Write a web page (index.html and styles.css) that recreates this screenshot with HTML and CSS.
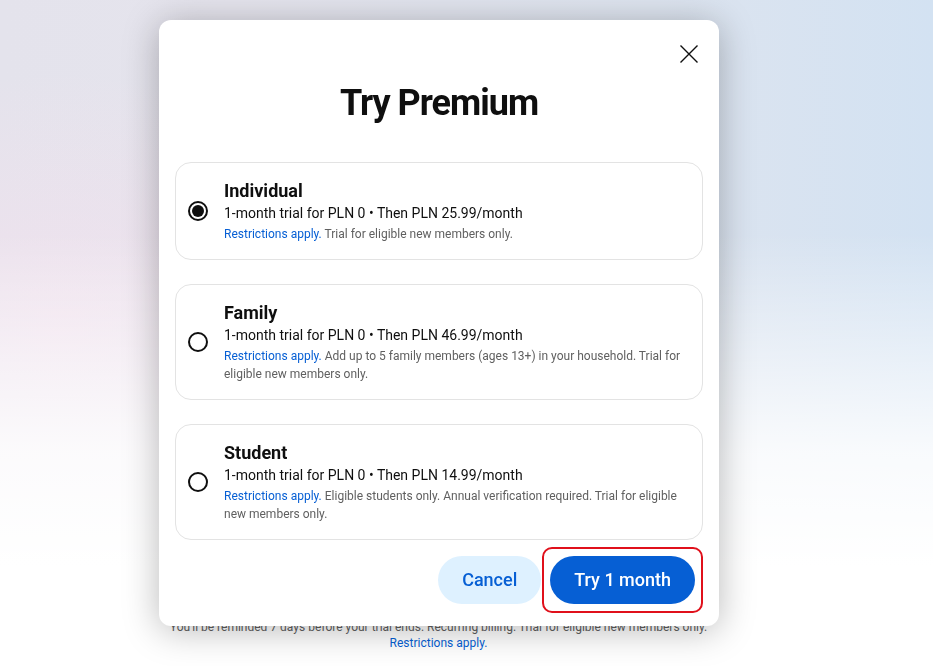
FILE: index.html
```html
<!DOCTYPE html>
<html lang="en">
<head>
<meta charset="utf-8">
<title>Try Premium</title>
<link rel="stylesheet" href="styles.css">
</head>
<body>
<main class="page">
  <p class="page-note">You'll be reminded 7 days before your trial ends. Recurring billing. Trial for eligible new members only.</p>
  <p class="page-note"><a class="link" href="#">Restrictions apply.</a></p>
</main>

<div class="modal" role="dialog" aria-labelledby="dlg-title">
  <div class="modal-top">
    <button class="close" aria-label="Close">
      <svg width="18" height="18" viewBox="0 0 18 18"><path d="M0.5 0.5 L17.5 17.5 M17.5 0.5 L0.5 17.5" stroke="#0f0f0f" stroke-width="1.4" fill="none"/></svg>
    </button>
  </div>
  <h1 class="title" id="dlg-title">Try Premium</h1>

  <div class="plans">
    <label class="plan">
      <span class="radio checked"></span>
      <span class="plan-body">
        <span class="plan-name">Individual</span>
        <span class="plan-price">1-month trial for PLN 0 • Then PLN 25.99/month</span>
        <span class="plan-note"><a class="link" href="#">Restrictions apply.</a> Trial for eligible new members only.</span>
      </span>
    </label>
    <label class="plan">
      <span class="radio"></span>
      <span class="plan-body">
        <span class="plan-name">Family</span>
        <span class="plan-price">1-month trial for PLN 0 • Then PLN 46.99/month</span>
        <span class="plan-note"><a class="link" href="#">Restrictions apply.</a> Add up to 5 family members (ages 13+) in your household. Trial for eligible new members only.</span>
      </span>
    </label>
    <label class="plan">
      <span class="radio"></span>
      <span class="plan-body">
        <span class="plan-name">Student</span>
        <span class="plan-price">1-month trial for PLN 0 • Then PLN 14.99/month</span>
        <span class="plan-note"><a class="link" href="#">Restrictions apply.</a> Eligible students only. Annual verification required. Trial for eligible new members only.</span>
      </span>
    </label>
  </div>

  <div class="actions">
    <button class="btn btn-cancel">Cancel</button>
    <span class="highlight"><button class="btn btn-primary">Try 1 month</button></span>
  </div>
</div>
</body>
</html>
```

FILE: styles.css
```css
* { box-sizing: border-box; }

html, body {
  margin: 0;
  height: 666px;
  overflow: hidden;
}

body {
  font-family: Roboto, "Liberation Sans", Arial, sans-serif;
  color: #0f0f0f;
  background:
    linear-gradient(to bottom, rgba(255,255,255,0) 0%, rgba(255,255,255,0) 35%, rgba(255,255,255,0.85) 68%, #ffffff 85%),
    radial-gradient(ellipse 300px 260px at 60px 330px, rgba(245,225,238,0.7), rgba(245,225,238,0)),
    linear-gradient(to right, #e4e3ec 0%, #e5e4ed 25%, #dde4ef 70%, #d3e2f2 100%);
}

.page {
  width: 877px;
  padding-top: 619px;
}

.page-note {
  margin: 0;
  font-size: 12px;
  line-height: 16px;
  color: #606060;
  text-align: center;
}

.link {
  color: #065fd4;
  text-decoration: none;
}

.modal {
  position: fixed;
  left: 159px;
  top: 20px;
  width: 560px;
  height: 606px;
  background: #fff;
  border-radius: 12px;
  box-shadow: 0 4px 36px rgba(0, 0, 0, 0.28);
  padding: 14px 16px 12px;
  display: flex;
  flex-direction: column;
}

.modal-top {
  display: flex;
  justify-content: flex-end;
  margin-right: -6px;
}

.close {
  width: 40px;
  height: 40px;
  border: 0;
  padding: 0;
  background: transparent;
  display: flex;
  align-items: center;
  justify-content: center;
  cursor: pointer;
}

.title {
  margin: 9px 0 39px;
  text-align: center;
  font-size: 36px;
  line-height: 40px;
  font-weight: 700;
  letter-spacing: -1px;
}

.plans {
  display: flex;
  flex-direction: column;
  gap: 24px;
}

.plan {
  display: flex;
  align-items: center;
  gap: 16px;
  border: 1px solid #e3e3e3;
  border-radius: 16px;
  padding: 16px 16px 15px 12px;
}

.radio {
  flex: none;
  width: 20px;
  height: 20px;
  border: 2px solid #0f0f0f;
  border-radius: 50%;
  display: flex;
  align-items: center;
  justify-content: center;
}

.radio.checked::after {
  content: "";
  width: 12px;
  height: 12px;
  border-radius: 50%;
  background: #0f0f0f;
}

.plan-body {
  display: flex;
  flex-direction: column;
}

.plan-name {
  font-size: 18px;
  line-height: 24px;
  font-weight: 700;
}

.plan-price {
  font-size: 14px;
  line-height: 20px;
}

.plan-note {
  margin-top: 2px;
  font-size: 12px;
  line-height: 18.5px;
  color: #606060;
}

.actions {
  margin-top: 7px;
  display: flex;
  justify-content: flex-end;
  align-items: center;
  gap: 1px;
}

.btn {
  height: 48px;
  padding: 0 24px;
  border: 0;
  border-radius: 24px;
  font-family: Roboto, "Liberation Sans", Arial, sans-serif;
  font-size: 18px;
  font-weight: 500;
  cursor: pointer;
}

.btn-cancel {
  background: #def1ff;
  color: #065fd4;
}

.btn-primary {
  background: #065fd4;
  color: #fff;
}

.highlight {
  display: flex;
  border: 2px solid #e0101b;
  border-radius: 10px;
  padding: 7px 6px;
}
```
